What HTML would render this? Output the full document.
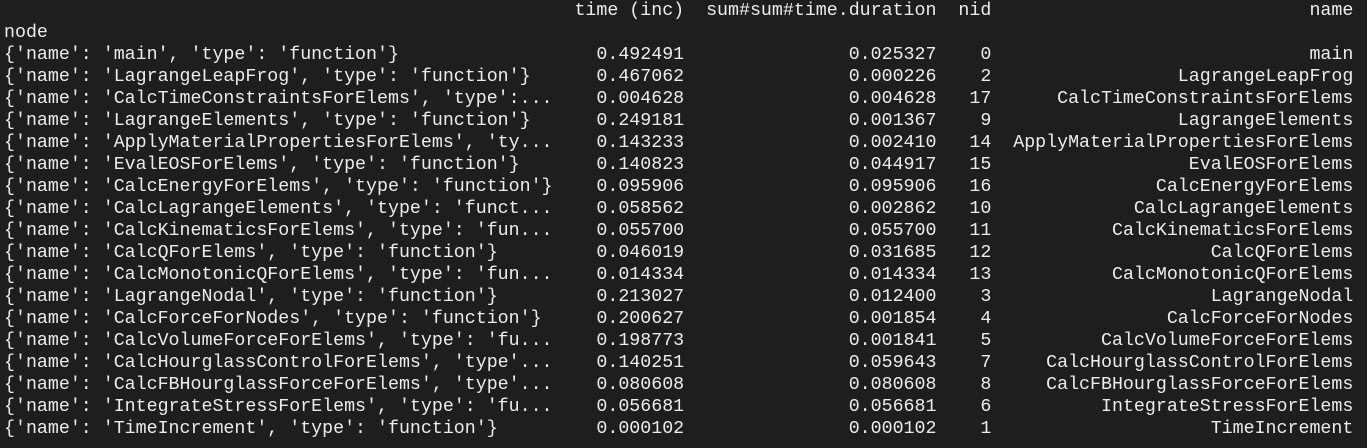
<!DOCTYPE html>
<html><head><meta charset="utf-8"><style>
html,body{margin:0;padding:0;background:#1e1e1e;width:1367px;height:448px;overflow:hidden}
#t{position:absolute;left:4px;top:0;font-family:"Liberation Mono","DejaVu Sans Mono",monospace;font-size:18.3px;line-height:22px;color:#ececec}
.r{height:22px;white-space:pre}
.r span{display:inline-block;white-space:pre}
.a{width:50ch}.b{width:12ch;text-align:right}.c{width:23ch;text-align:right}.d{width:5ch;text-align:right}.e{width:33ch;text-align:right}
</style></head><body><div id="t"><div class="r"><span class="a"></span><span class="b">time (inc)</span><span class="c">sum#sum#time.duration</span><span class="d">nid</span><span class="e">name</span></div><div class="r">node</div><div class="r"><span class="a">{'name': 'main', 'type': 'function'}</span><span class="b">0.492491</span><span class="c">0.025327</span><span class="d">0</span><span class="e">main</span></div><div class="r"><span class="a">{'name': 'LagrangeLeapFrog', 'type': 'function'}</span><span class="b">0.467062</span><span class="c">0.000226</span><span class="d">2</span><span class="e">LagrangeLeapFrog</span></div><div class="r"><span class="a">{'name': 'CalcTimeConstraintsForElems', 'type':...</span><span class="b">0.004628</span><span class="c">0.004628</span><span class="d">17</span><span class="e">CalcTimeConstraintsForElems</span></div><div class="r"><span class="a">{'name': 'LagrangeElements', 'type': 'function'}</span><span class="b">0.249181</span><span class="c">0.001367</span><span class="d">9</span><span class="e">LagrangeElements</span></div><div class="r"><span class="a">{'name': 'ApplyMaterialPropertiesForElems', 'ty...</span><span class="b">0.143233</span><span class="c">0.002410</span><span class="d">14</span><span class="e">ApplyMaterialPropertiesForElems</span></div><div class="r"><span class="a">{'name': 'EvalEOSForElems', 'type': 'function'}</span><span class="b">0.140823</span><span class="c">0.044917</span><span class="d">15</span><span class="e">EvalEOSForElems</span></div><div class="r"><span class="a">{'name': 'CalcEnergyForElems', 'type': 'function'}</span><span class="b">0.095906</span><span class="c">0.095906</span><span class="d">16</span><span class="e">CalcEnergyForElems</span></div><div class="r"><span class="a">{'name': 'CalcLagrangeElements', 'type': 'funct...</span><span class="b">0.058562</span><span class="c">0.002862</span><span class="d">10</span><span class="e">CalcLagrangeElements</span></div><div class="r"><span class="a">{'name': 'CalcKinematicsForElems', 'type': 'fun...</span><span class="b">0.055700</span><span class="c">0.055700</span><span class="d">11</span><span class="e">CalcKinematicsForElems</span></div><div class="r"><span class="a">{'name': 'CalcQForElems', 'type': 'function'}</span><span class="b">0.046019</span><span class="c">0.031685</span><span class="d">12</span><span class="e">CalcQForElems</span></div><div class="r"><span class="a">{'name': 'CalcMonotonicQForElems', 'type': 'fun...</span><span class="b">0.014334</span><span class="c">0.014334</span><span class="d">13</span><span class="e">CalcMonotonicQForElems</span></div><div class="r"><span class="a">{'name': 'LagrangeNodal', 'type': 'function'}</span><span class="b">0.213027</span><span class="c">0.012400</span><span class="d">3</span><span class="e">LagrangeNodal</span></div><div class="r"><span class="a">{'name': 'CalcForceForNodes', 'type': 'function'}</span><span class="b">0.200627</span><span class="c">0.001854</span><span class="d">4</span><span class="e">CalcForceForNodes</span></div><div class="r"><span class="a">{'name': 'CalcVolumeForceForElems', 'type': 'fu...</span><span class="b">0.198773</span><span class="c">0.001841</span><span class="d">5</span><span class="e">CalcVolumeForceForElems</span></div><div class="r"><span class="a">{'name': 'CalcHourglassControlForElems', 'type'...</span><span class="b">0.140251</span><span class="c">0.059643</span><span class="d">7</span><span class="e">CalcHourglassControlForElems</span></div><div class="r"><span class="a">{'name': 'CalcFBHourglassForceForElems', 'type'...</span><span class="b">0.080608</span><span class="c">0.080608</span><span class="d">8</span><span class="e">CalcFBHourglassForceForElems</span></div><div class="r"><span class="a">{'name': 'IntegrateStressForElems', 'type': 'fu...</span><span class="b">0.056681</span><span class="c">0.056681</span><span class="d">6</span><span class="e">IntegrateStressForElems</span></div><div class="r"><span class="a">{'name': 'TimeIncrement', 'type': 'function'}</span><span class="b">0.000102</span><span class="c">0.000102</span><span class="d">1</span><span class="e">TimeIncrement</span></div></div></body></html>
